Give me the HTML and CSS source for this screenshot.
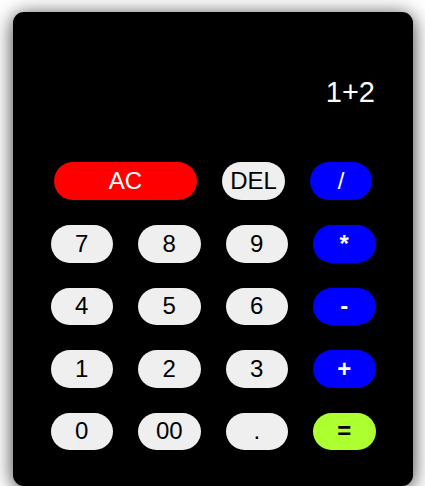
FILE: index.html
```html
<!DOCTYPE html>
<html>
<head>
<meta charset="utf-8">
<link rel="stylesheet" href="styles.css">
</head>
<body>
<div class="calc">
  <div class="display">1+2</div>
  <div class="row-top">
    <button class="btn btn-ac">AC</button>
    <button class="btn btn-del">DEL</button>
    <button class="btn btn-op btn-div">/</button>
  </div>
  <div class="keys">
    <button class="btn">7</button>
    <button class="btn">8</button>
    <button class="btn">9</button>
    <button class="btn btn-op">*</button>
    <button class="btn">4</button>
    <button class="btn">5</button>
    <button class="btn">6</button>
    <button class="btn btn-op">-</button>
    <button class="btn">1</button>
    <button class="btn">2</button>
    <button class="btn">3</button>
    <button class="btn btn-op">+</button>
    <button class="btn">0</button>
    <button class="btn">00</button>
    <button class="btn">.</button>
    <button class="btn btn-eq">=</button>
  </div>
</div>
</body>
</html>
```
FILE: styles.css
```css
html, body {
  margin: 0;
  padding: 0;
  background: #fff;
}
body {
  padding: 12px 0 0 13px;
  font-family: "Liberation Sans", Arial, sans-serif;
}
.calc {
  width: 400px;
  height: 474px;
  box-sizing: border-box;
  background: #000;
  border-radius: 11px;
  box-shadow: 0 3px 20px rgba(0, 0, 0, 0.8);
  padding: 64px 25px 0 25px;
}
.display {
  color: #fff;
  font-size: 29px;
  height: 33px;
  line-height: 33px;
  text-align: right;
  padding-right: 13px;
  margin-bottom: 53px;
}
.row-top {
  display: flex;
  gap: 25px;
  padding-left: 16px;
  height: 38px;
  margin-bottom: 25px;
}
.keys {
  display: grid;
  grid-template-columns: repeat(4, 87.5px);
  grid-auto-rows: 37.5px;
  row-gap: 25px;
  justify-items: center;
}
.btn {
  width: 62.5px;
  height: 37.5px;
  border: none;
  border-radius: 19px;
  background: #efefef;
  color: #000;
  font-family: "Liberation Sans", Arial, sans-serif;
  font-size: 24px;
  padding: 0;
  margin: 0;
}
.row-top .btn {
  height: 38px;
}
.btn-ac {
  width: 143px;
  background: #ff0000;
  color: #fff;
}
.btn-del {
  width: 63px;
}
.btn-op {
  background: #0000ff;
  color: #fff;
  font-weight: bold;
}
.row-top .btn-div {
  width: 62px;
  font-weight: normal;
}
.btn-eq {
  background: #adff2f;
  font-weight: bold;
}
```
